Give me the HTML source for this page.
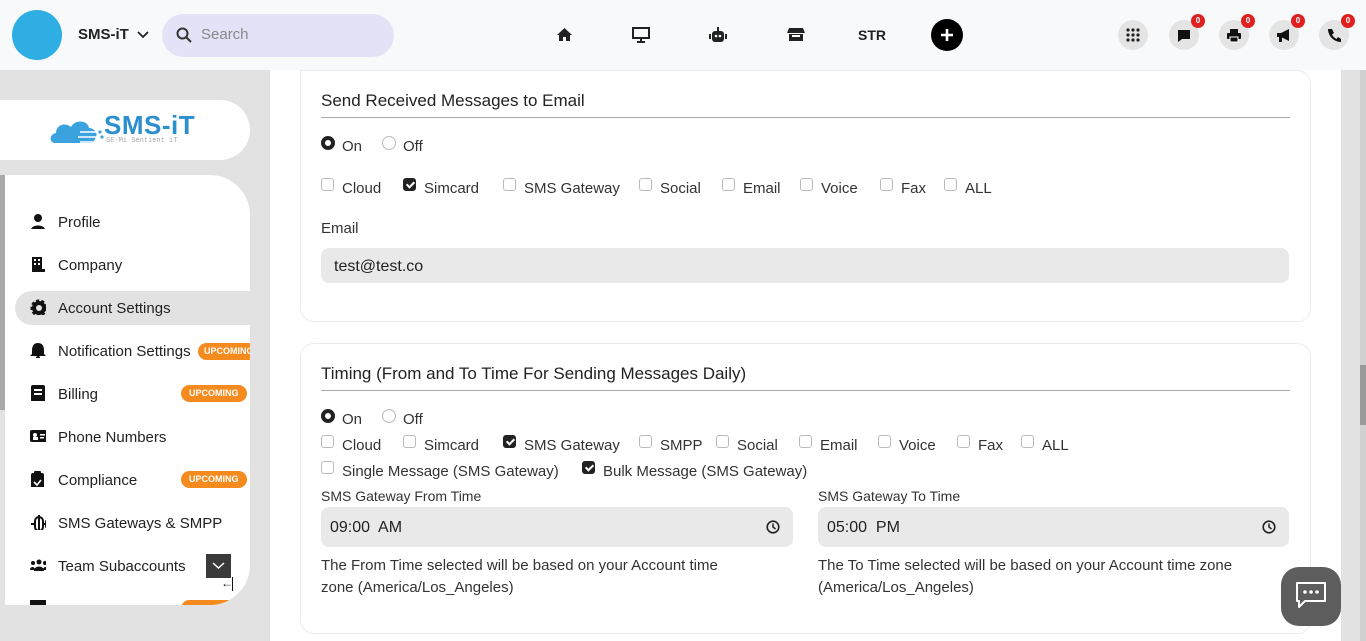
<!DOCTYPE html>
<html><head><meta charset="utf-8"><style>
*{box-sizing:border-box;margin:0;padding:0}
body{width:1366px;height:641px;overflow:hidden;font-family:"Liberation Sans",sans-serif;color:#222;background:#fff;position:relative}
.abs{position:absolute}
.top{left:0;top:0;width:1366px;height:70px;background:#f8f9fa}
.side{left:0;top:70px;width:270px;height:571px;background:#e2e2e2}
.rgray{left:1341px;top:70px;width:25px;height:571px;background:#e2e2e2}
.card{background:#fff;border:1px solid #ebebeb;border-radius:14px}
.t{position:absolute;font-size:15px;color:#333;white-space:nowrap;margin-top:1px}
.h{position:absolute;font-size:17px;color:#222;white-space:nowrap;margin-top:1px}
.cb{position:absolute;width:13px;height:13px;border:1px solid #bbb;border-radius:3px;background:#fff}
.cb.on{background:#222;border-color:#222}
.cb.on::after{content:"";position:absolute;left:3.5px;top:1px;width:3px;height:6px;border:solid #fff;border-width:0 2px 2px 0;transform:rotate(45deg)}
.rd{position:absolute;width:14px;height:14px;border:1px solid #bbb;border-radius:50%}
.rd.on{border:4px solid #222}
.inp{position:absolute;background:#e9e9e9;border-radius:8px}
.ni{position:absolute;left:30px;width:16px;height:16px}
.nl{position:absolute;left:58px;font-size:15px;color:#222;white-space:nowrap;margin-top:1px}
.up{position:absolute;background:#f58a1f;color:#fff;font-size:9px;font-weight:bold;border-radius:9px;height:17px;line-height:17px;padding:0 8px}
.ib{position:absolute;top:20px;width:30px;height:30px;border-radius:50%;background:#e4e4e4}
.bd{position:absolute;right:-6px;top:-6px;width:14px;height:14px;border-radius:50%;background:#e02020;color:#fff;font-size:8px;font-weight:bold;text-align:center;line-height:14px}
</style></head><body>
<div class="abs top"></div>
<div class="abs" style="left:12px;top:10px;width:50px;height:50px;border-radius:50%;background:#2eaee3"></div>
<div class="abs" style="left:78px;top:26px;font-size:15px;font-weight:bold">SMS-iT</div>
<svg class="abs" style="left:137px;top:30px" width="12" height="9"><path d="M1 2l5 5 5-5" stroke="#222" stroke-width="1.8" fill="none"/></svg>
<div class="abs" style="left:162px;top:14px;width:232px;height:43px;border-radius:22px;background:#e3e3f7"></div>
<svg class="abs" style="left:176px;top:27px" width="16" height="16"><circle cx="6.5" cy="6.5" r="5" stroke="#333" stroke-width="2" fill="none"/><path d="M10 10l5 5" stroke="#333" stroke-width="2"/></svg>
<div class="abs" style="left:201px;top:26px;font-size:15px;color:#888">Search</div>
<svg class="abs" style="left:556px;top:27px" width="17" height="15"><path d="M8.5 1L1 8h2v6h4v-4h3v4h4V8h2z" fill="#222"/></svg>
<svg class="abs" style="left:632px;top:27px" width="18" height="16"><rect x="1" y="1" width="16" height="10" stroke="#222" stroke-width="2" fill="none"/><path d="M9 11v3M5 15h8" stroke="#222" stroke-width="2"/></svg>
<svg class="abs" style="left:709px;top:26px" width="18" height="17"><rect x="3" y="5" width="12" height="11" rx="3" fill="#222"/><rect x="0" y="8" width="2" height="5" fill="#222"/><rect x="16" y="8" width="2" height="5" fill="#222"/><rect x="8" y="1" width="2" height="4" fill="#222"/><circle cx="7" cy="10" r="1.3" fill="#fff"/><circle cx="11" cy="10" r="1.3" fill="#fff"/></svg>
<svg class="abs" style="left:787px;top:27px" width="18" height="15"><path d="M2 1h14l2 5H0z" fill="#222"/><rect x="2" y="7" width="14" height="7" fill="#222"/><rect x="5" y="8" width="8" height="2" fill="#fff"/></svg>
<div class="abs" style="left:858px;top:27px;font-size:14px;font-weight:bold">STR</div>
<div class="abs" style="left:931px;top:19px;width:32px;height:32px;border-radius:50%;background:#000"></div>
<svg class="abs" style="left:939px;top:27px" width="16" height="16"><path d="M8 2v12M2 8h12" stroke="#fff" stroke-width="2.6"/></svg>
<div class="ib" style="left:1118px"><svg style="position:absolute;left:8px;top:8px" width="14" height="14"><g fill="#222"><circle cx="2" cy="2" r="1.6"/><circle cx="7" cy="2" r="1.6"/><circle cx="12" cy="2" r="1.6"/><circle cx="2" cy="7" r="1.6"/><circle cx="7" cy="7" r="1.6"/><circle cx="12" cy="7" r="1.6"/><circle cx="2" cy="12" r="1.6"/><circle cx="7" cy="12" r="1.6"/><circle cx="12" cy="12" r="1.6"/></g></svg></div>
<div class="ib" style="left:1169px"><svg style="position:absolute;left:8px;top:9px" width="14" height="14"><path d="M1 1h12v9H5l-4 3z" fill="#111"/></svg><div class="bd">0</div></div>
<div class="ib" style="left:1219px"><svg style="position:absolute;left:7px;top:8px" width="16" height="15"><rect x="4" y="1" width="8" height="4" fill="#111"/><rect x="1" y="5" width="14" height="6" rx="1" fill="#111"/><rect x="4" y="9" width="8" height="5" fill="#111" stroke="#fff"/></svg><div class="bd">0</div></div>
<div class="ib" style="left:1269px"><svg style="position:absolute;left:7px;top:8px" width="16" height="15"><path d="M1 5h4l8-4v12L5 9H1z" fill="#111"/><rect x="3" y="9" width="3" height="5" fill="#111"/></svg><div class="bd">0</div></div>
<div class="ib" style="left:1319px"><svg style="position:absolute;left:8px;top:8px" width="14" height="14"><path d="M2 1l3 0 2 4-2 1.5c1 2 2.5 3.5 4.5 4.5L11 9l3 2v3c-7 0-13-6-13-13z" fill="#111"/></svg><div class="bd">0</div></div>

<div class="abs side"></div>
<div class="abs rgray"></div>
<div class="abs" style="left:1360px;top:70px;width:6px;height:571px;background:#d0d0d0"></div>
<div class="abs" style="left:1360px;top:365px;width:6px;height:60px;background:#9a9a9a"></div>
<div class="abs" style="left:0;top:175px;width:5px;height:235px;background:#a8a8a8"></div>

<div class="abs" style="left:0;top:100px;width:250px;height:60px;border-radius:0 30px 30px 0;background:#fff"></div>
<svg class="abs" style="left:50px;top:112px" width="56" height="34"><path d="M5 31c-6 0-6-9 1-10 0-8 9-11 15-6 4-8 17-7 18 1 5 0 9 5 7 9l-3 6z" fill="#3aa3de"/><path d="M30 20h20M28 25h24M30 30h16" stroke="#fff" stroke-width="1.5"/><circle cx="50" cy="20" r="1.6" fill="#3aa3de"/><circle cx="52" cy="25" r="1.6" fill="#3aa3de"/></svg>
<div class="abs" style="left:104px;top:110px;font-size:26px;font-weight:bold;color:#2b8fcf;letter-spacing:.5px">SMS-iT</div>
<div class="abs" style="left:106px;top:137px;font-size:7px;color:#aaa;font-family:'Liberation Mono',monospace">SE-Mi Sentient iT</div>

<div class="abs" style="left:5px;top:175px;width:245px;height:430px;background:#fff;border-radius:0 40px 40px 0;overflow:hidden">
 <div class="abs" style="left:10px;top:116px;width:240px;height:34px;border-radius:17px 0 0 17px;background:#e2e2e2"></div>
 <div class="abs" style="left:176px;top:425px;width:64px;height:17px;border-radius:9px;background:#f58a1f"></div>
</div>
<svg class="ni" style="top:213px" width="16" height="17"><circle cx="8" cy="5" r="4" fill="#111"/><path d="M1 17c0-6 14-6 14 0z" fill="#111"/></svg>
<div class="nl" style="top:213px">Profile</div>
<svg class="ni" style="top:256px" width="16" height="17"><rect x="2" y="1" width="10" height="16" fill="#111"/><g fill="#fff"><rect x="4" y="3" width="2" height="2"/><rect x="8" y="3" width="2" height="2"/><rect x="4" y="7" width="2" height="2"/><rect x="8" y="7" width="2" height="2"/></g><rect x="11" y="13" width="4" height="4" fill="#111"/></svg>
<div class="nl" style="top:256px">Company</div>
<svg class="ni" style="top:299px" width="18" height="18"><circle cx="9" cy="9" r="7" fill="#111" stroke="#111" stroke-width="3" stroke-dasharray="3 2"/><circle cx="9" cy="9" r="3" fill="#e2e2e2"/></svg>
<div class="nl" style="top:299px">Account Settings</div>
<svg class="ni" style="top:342px" width="16" height="18"><path d="M8 1c4 0 6 3 6 7v4l2 2H0l2-2V8c0-4 2-7 6-7z" fill="#111"/><circle cx="8" cy="16" r="2" fill="#111"/></svg>
<div class="nl" style="top:342px">Notification Settings</div>
<div class="up" style="left:198px;top:343px;border-radius:9px 0 0 9px;width:52px;padding:0 6px;overflow:hidden">UPCOMING</div>
<svg class="ni" style="top:385px" width="16" height="19"><rect x="1" y="0" width="14" height="19" rx="2" fill="#111"/><rect x="4" y="4" width="8" height="2" fill="#fff"/><rect x="4" y="8" width="8" height="2" fill="#fff"/></svg>
<div class="nl" style="top:385px">Billing</div>
<div class="up" style="left:181px;top:385px">UPCOMING</div>
<svg class="ni" style="top:430px" width="18" height="13"><rect x="0" y="0" width="17" height="12" rx="2" fill="#111"/><circle cx="5" cy="5" r="2" fill="#fff"/><rect x="3" y="7" width="5" height="3" fill="#fff"/><rect x="10" y="4" width="5" height="1.5" fill="#fff"/><rect x="10" y="7" width="4" height="1.5" fill="#fff"/></svg>
<div class="nl" style="top:428px">Phone Numbers</div>
<svg class="ni" style="top:471px" width="16" height="19"><rect x="1" y="2" width="13" height="17" rx="2" fill="#111"/><rect x="4" y="0" width="7" height="4" rx="1" fill="#111"/><path d="M4 11l3 3 4-5" stroke="#fff" stroke-width="1.6" fill="none"/></svg>
<div class="nl" style="top:471px">Compliance</div>
<div class="up" style="left:181px;top:471px">UPCOMING</div>
<svg class="ni" style="top:514px" width="20" height="20"><path d="M1 10h4M14 10h2" stroke="#111" stroke-width="2"/><rect x="5" y="3" width="8" height="14" rx="4" fill="none" stroke="#111" stroke-width="2"/><path d="M9 1v18" stroke="#111" stroke-width="2"/><path d="M15 6l5 4-5 4z" fill="#111"/></svg>
<div class="nl" style="top:514px">SMS Gateways &amp; SMPP</div>
<svg class="ni" style="top:559px" width="18" height="12"><circle cx="9" cy="3" r="2.5" fill="#111"/><circle cx="3" cy="4" r="2" fill="#111"/><circle cx="15" cy="4" r="2" fill="#111"/><path d="M4 12c0-6 10-6 10 0zM0 11c0-4 5-4 5 0zM13 11c0-4 5-4 5 0z" fill="#111"/></svg>
<div class="nl" style="top:557px">Team Subaccounts</div>
<div class="abs" style="left:206px;top:554px;width:25px;height:24px;background:#3a3a3a"></div>
<svg class="abs" style="left:212px;top:561px" width="13" height="9"><path d="M1 2l5.5 5 5.5-5" stroke="#fff" stroke-width="1.5" fill="none"/></svg>
<div class="abs" style="left:221px;top:576px;font-size:12px">&#8592;</div>
<div class="abs" style="left:232px;top:577px;width:1px;height:14px;background:#111"></div>
<div class="abs" style="left:30px;top:600px;width:16px;height:5px;background:#111"></div>

<!-- Card 1 -->
<div class="abs card" style="left:300px;top:70px;width:1011px;height:252px;border-top-left-radius:0;border-top-right-radius:14px"></div>
<div class="h" style="left:321px;top:90px">Send Received Messages to Email</div>
<div class="abs" style="left:321px;top:117px;width:969px;height:1px;background:#aaa"></div>
<div class="rd on" style="left:321px;top:136px"></div><div class="t" style="left:342px;top:137px">On</div>
<div class="rd" style="left:382px;top:136px"></div><div class="t" style="left:403px;top:137px">Off</div>
<div class="cb" style="left:321px;top:178px"></div><div class="t" style="left:342px;top:179px">Cloud</div>
<div class="cb on" style="left:403px;top:178px"></div><div class="t" style="left:424px;top:179px">Simcard</div>
<div class="cb" style="left:503px;top:178px"></div><div class="t" style="left:524px;top:179px">SMS Gateway</div>
<div class="cb" style="left:639px;top:178px"></div><div class="t" style="left:660px;top:179px">Social</div>
<div class="cb" style="left:722px;top:178px"></div><div class="t" style="left:743px;top:179px">Email</div>
<div class="cb" style="left:800px;top:178px"></div><div class="t" style="left:821px;top:179px">Voice</div>
<div class="cb" style="left:880px;top:178px"></div><div class="t" style="left:901px;top:179px">Fax</div>
<div class="cb" style="left:944px;top:178px"></div><div class="t" style="left:965px;top:179px">ALL</div>
<div class="t" style="left:321px;top:219px">Email</div>
<div class="inp" style="left:321px;top:248px;width:968px;height:35px"></div>
<div class="t" style="left:334px;top:257px;font-size:16px;color:#222">test@test.co</div>

<!-- Card 2 -->
<div class="abs card" style="left:300px;top:343px;width:1011px;height:291px"></div>
<div class="h" style="left:321px;top:363px">Timing (From and To Time For Sending Messages Daily)</div>
<div class="abs" style="left:321px;top:390px;width:969px;height:1px;background:#aaa"></div>
<div class="rd on" style="left:321px;top:409px"></div><div class="t" style="left:342px;top:410px">On</div>
<div class="rd" style="left:382px;top:409px"></div><div class="t" style="left:403px;top:410px">Off</div>
<div class="cb" style="left:321px;top:435px"></div><div class="t" style="left:342px;top:436px">Cloud</div>
<div class="cb" style="left:403px;top:435px"></div><div class="t" style="left:424px;top:436px">Simcard</div>
<div class="cb on" style="left:503px;top:435px"></div><div class="t" style="left:524px;top:436px">SMS Gateway</div>
<div class="cb" style="left:639px;top:435px"></div><div class="t" style="left:660px;top:436px">SMPP</div>
<div class="cb" style="left:716px;top:435px"></div><div class="t" style="left:737px;top:436px">Social</div>
<div class="cb" style="left:799px;top:435px"></div><div class="t" style="left:820px;top:436px">Email</div>
<div class="cb" style="left:878px;top:435px"></div><div class="t" style="left:899px;top:436px">Voice</div>
<div class="cb" style="left:957px;top:435px"></div><div class="t" style="left:978px;top:436px">Fax</div>
<div class="cb" style="left:1021px;top:435px"></div><div class="t" style="left:1042px;top:436px">ALL</div>
<div class="cb" style="left:321px;top:461px"></div><div class="t" style="left:342px;top:462px">Single Message (SMS Gateway)</div>
<div class="cb on" style="left:582px;top:461px"></div><div class="t" style="left:603px;top:462px">Bulk Message (SMS Gateway)</div>
<div class="t" style="left:321px;top:487px;font-size:14px">SMS Gateway From Time</div>
<div class="t" style="left:818px;top:487px;font-size:14px">SMS Gateway To Time</div>
<div class="inp" style="left:321px;top:507px;width:472px;height:40px"></div>
<div class="inp" style="left:818px;top:507px;width:471px;height:40px"></div>
<div class="t" style="left:330px;top:518px;font-size:16px;color:#222">09:00&nbsp; AM</div>
<div class="t" style="left:827px;top:518px;font-size:16px;color:#222">05:00&nbsp; PM</div>
<svg class="abs" style="left:766px;top:520px" width="14" height="14"><circle cx="7" cy="7" r="5.8" stroke="#222" stroke-width="1.6" fill="none"/><path d="M7 3.5V7l2.5 2" stroke="#222" stroke-width="1.5" fill="none"/></svg>
<svg class="abs" style="left:1262px;top:520px" width="14" height="14"><circle cx="7" cy="7" r="5.8" stroke="#222" stroke-width="1.6" fill="none"/><path d="M7 3.5V7l2.5 2" stroke="#222" stroke-width="1.5" fill="none"/></svg>
<div class="t" style="left:321px;top:554px;line-height:22px">The From Time selected will be based on your Account time<br>zone (America/Los_Angeles)</div>
<div class="t" style="left:818px;top:554px;line-height:22px">The To Time selected will be based on your Account time zone<br>(America/Los_Angeles)</div>

<div class="abs" style="left:1281px;top:567px;width:60px;height:59px;border-radius:18px;background:#5d5d5d"></div>
<svg class="abs" style="left:1294px;top:580px" width="36" height="34"><path d="M3 3h28v18H11l-6 6v-6H3z" stroke="#fff" stroke-width="2" fill="none" stroke-linejoin="round"/><circle cx="11" cy="12" r="1.8" fill="#fff"/><circle cx="17" cy="12" r="1.8" fill="#fff"/><circle cx="23" cy="12" r="1.8" fill="#fff"/></svg>
</body></html>
